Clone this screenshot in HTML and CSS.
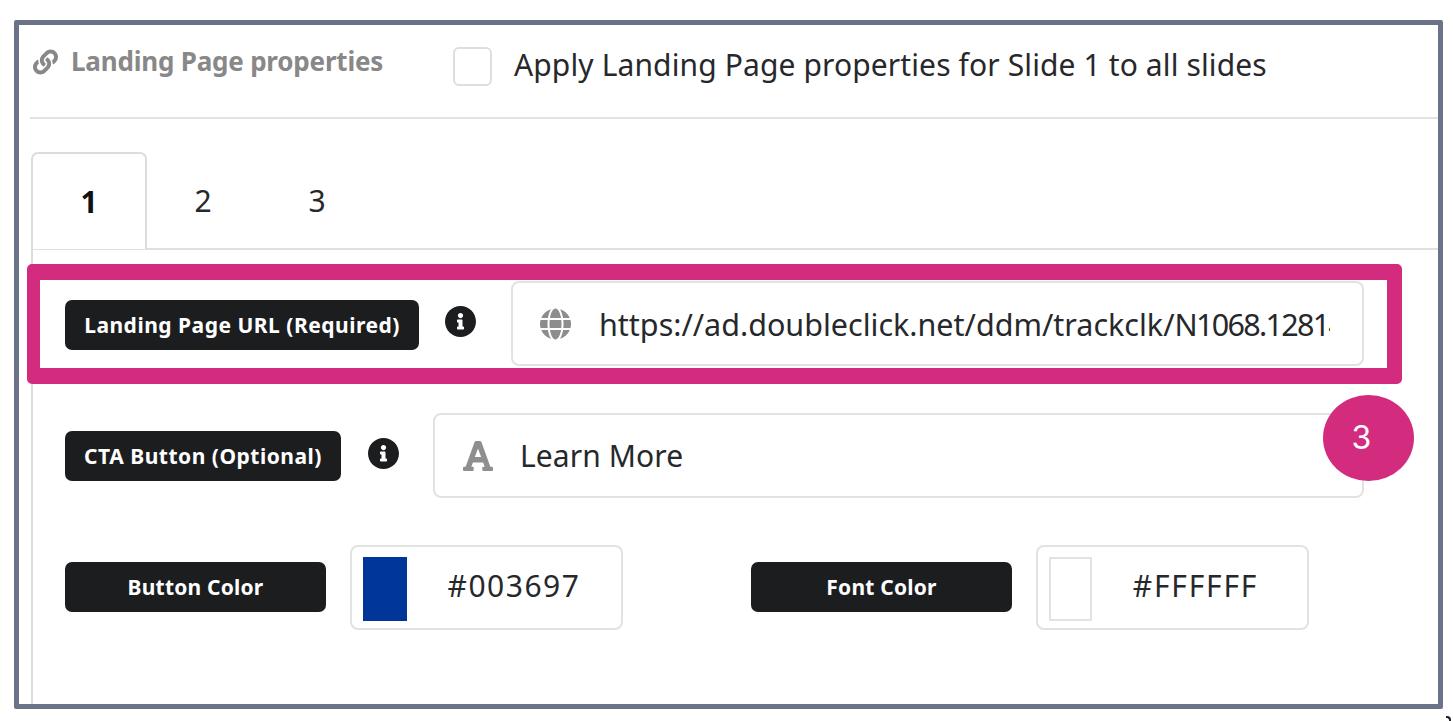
FILE: index.html
```html
<!DOCTYPE html>
<html lang="en">
<head>
<meta charset="utf-8">
<title>Landing Page properties</title>
<link rel="stylesheet" href="styles.css">
</head>
<body>
<div class="frame">
  <header class="head">
    <div class="title">
      <svg class="link-icon" viewBox="0 0 512 512"><path d="M326.612 185.391c59.747 59.809 58.927 155.698.36 214.59-.11.12-.24.25-.36.37l-67.2 67.2c-59.27 59.27-155.699 59.262-214.96 0-59.27-59.26-59.27-155.7 0-214.96l37.106-37.106c9.84-9.84 26.786-3.3 27.294 10.606.648 17.722 3.826 35.527 9.69 52.721 1.986 5.822.567 12.262-3.783 16.612l-13.087 13.087c-28.026 28.026-28.905 73.66-1.155 101.96 28.024 28.579 74.086 28.749 102.325.51l67.2-67.19c28.191-28.191 28.073-73.757 0-101.83-3.701-3.694-7.429-6.564-10.341-8.569a16.037 16.037 0 0 1-6.947-12.606c-.396-10.567 3.348-21.456 11.698-29.806l21.054-21.055c5.521-5.521 14.182-6.199 20.584-1.731a152.482 152.482 0 0 1 20.522 17.197zM467.547 44.449c-59.261-59.262-155.69-59.27-214.96 0l-67.2 67.2c-.12.12-.25.25-.36.37-58.566 58.892-59.387 154.781.36 214.59a152.454 152.454 0 0 0 20.521 17.196c6.402 4.468 15.064 3.789 20.584-1.731l21.054-21.055c8.35-8.35 12.094-19.239 11.698-29.806a16.037 16.037 0 0 0-6.947-12.606c-2.912-2.005-6.64-4.875-10.341-8.569-28.073-28.073-28.191-73.639 0-101.83l67.2-67.19c28.239-28.239 74.3-28.069 102.325.51 27.75 28.3 26.872 73.934-1.155 101.96l-13.087 13.087c-4.35 4.35-5.769 10.79-3.783 16.612 5.864 17.194 9.042 34.999 9.69 52.721.509 13.906 17.454 20.446 27.294 10.606l37.106-37.106c59.271-59.259 59.271-155.699.001-214.959z"/></svg>
      <span class="title-text">Landing Page properties</span>
    </div>
    <span class="checkbox"></span>
    <span class="apply">Apply Landing Page properties for Slide 1 to all slides</span>
  </header>
  <nav class="tabs">
    <span class="tab active">1</span>
    <span class="tab">2</span>
    <span class="tab">3</span>
  </nav>
  <section class="panel">
    <div class="row">
      <span class="label label-url">Landing Page URL (Required)</span>
      <svg class="info info-url" viewBox="8 8 496 496"><path d="M256 8C119.043 8 8 119.083 8 256c0 136.997 111.043 248 248 248s248-111.003 248-248C504 119.083 392.957 8 256 8zm0 110c23.196 0 42 18.804 42 42s-18.804 42-42 42-42-18.804-42-42 18.804-42 42-42zm56 254c0 6.627-5.373 12-12 12h-88c-6.627 0-12-5.373-12-12v-24c0-6.627 5.373-12 12-12h12v-64h-12c-6.627 0-12-5.373-12-12v-24c0-6.627 5.373-12 12-12h64c6.627 0 12 5.373 12 12v100h12c6.627 0 12 5.373 12 12v24z"/></svg>
      <div class="field field-url">
        <svg class="globe" viewBox="0 0 496 512"><path d="M336.5 160C322 70.7 287.8 8 248 8s-74 62.7-88.5 152h177zM152 256c0 22.2 1.2 43.5 3.3 64h185.3c2.1-20.5 3.3-41.8 3.3-64s-1.2-43.5-3.3-64H155.3c-2.1 20.5-3.3 41.8-3.3 64zm324.7-96c-28.6-67.9-86.5-120.4-158-141.6 24.4 33.8 41.2 84.7 50 141.6h108zM177.2 18.4C105.8 39.6 47.8 92.1 19.3 160h108c8.7-56.9 25.5-107.8 49.9-141.6zM487.4 192H372.7c2.1 21 3.3 42.5 3.3 64s-1.2 43-3.3 64h114.6c5.5-20.5 8.6-41.8 8.6-64s-3.1-43.5-8.5-64zM120 256c0-21.5 1.2-43 3.3-64H8.6C3.2 212.5 0 233.8 0 256s3.2 43.5 8.6 64h114.6c-2-21-3.2-42.5-3.2-64zm39.5 96c14.5 89.3 48.7 152 88.5 152s74-62.7 88.5-152h-177zm159.3 141.6c71.4-21.2 129.4-73.7 158-141.6h-108c-8.8 56.9-25.6 107.8-50 141.6zM19.3 352c28.6 67.9 86.5 120.4 158 141.6-24.4-33.8-41.2-84.7-50-141.6h-108z"/></svg>
        <span class="url-text">https://ad.doubleclick.net/ddm/trackclk/<span class="url-tail">N1068.12814</span></span>
      </div>
    </div>
    <div class="row">
      <span class="label label-cta">CTA Button (Optional)</span>
      <svg class="info info-cta" viewBox="8 8 496 496"><path d="M256 8C119.043 8 8 119.083 8 256c0 136.997 111.043 248 248 248s248-111.003 248-248C504 119.083 392.957 8 256 8zm0 110c23.196 0 42 18.804 42 42s-18.804 42-42 42-42-18.804-42-42 18.804-42 42-42zm56 254c0 6.627-5.373 12-12 12h-88c-6.627 0-12-5.373-12-12v-24c0-6.627 5.373-12 12-12h12v-64h-12c-6.627 0-12-5.373-12-12v-24c0-6.627 5.373-12 12-12h64c6.627 0 12 5.373 12 12v100h12c6.627 0 12 5.373 12 12v24z"/></svg>
      <div class="field field-cta">
        <svg class="font-icon" viewBox="0 32 448 448"><path d="M432 416h-23.41L277.88 53.69A32 32 0 0 0 247.58 32h-47.16a32 32 0 0 0-30.3 21.69L39.41 416H16a16 16 0 0 0-16 16v32a16 16 0 0 0 16 16h128a16 16 0 0 0 16-16v-32a16 16 0 0 0-16-16h-19.58l23.3-64h152.56l23.3 64H304a16 16 0 0 0-16 16v32a16 16 0 0 0 16 16h128a16 16 0 0 0 16-16v-32a16 16 0 0 0-16-16zM176.85 272L224 142.51 271.15 272z"/></svg>
        <span class="cta-text">Learn More</span>
      </div>
    </div>
    <div class="row">
      <span class="label label-color">Button Color</span>
      <div class="field field-color">
        <span class="swatch swatch-blue"></span>
        <span class="hex">#003697</span>
      </div>
      <span class="label label-color label-font">Font Color</span>
      <div class="field field-color">
        <span class="swatch swatch-white"></span>
        <span class="hex hex-white">#FFFFFF</span>
      </div>
    </div>
  </section>
  <div class="highlight"></div>
  <div class="callout">3</div>
</div>
<span class="corner-mark"></span>
</body>
</html>
```
FILE: styles.css
```css
* { box-sizing: border-box; }
html, body { margin: 0; height: 721px; overflow: hidden; background: #fff; }
body { font-family: "Noto Sans", "Open Sans", sans-serif; color: #26282b; }

.frame {
  position: relative;
  display: flex;
  flex-direction: column;
  width: 1429px;
  height: 689px;
  margin: 20px 0 0 14px;
  border: 5px solid #6b7389;
  border-radius: 2px;
  background: #fff;
}

.head {
  display: flex;
  align-items: flex-start;
  height: 94px;
  margin-left: 11px;
  border-bottom: 2px solid #e3e3e3;
  flex: none;
}
.title { display: flex; align-items: center; width: 423px; margin-top: 20px; color: #888; }
.link-icon { width: 25px; height: 26px; margin: 2px 13px 0 3px; fill: #888; flex: none; }
.title-text { font-size: 26px; font-weight: 700; line-height: 32px; letter-spacing: -0.2px; white-space: nowrap; }
.checkbox { width: 39px; height: 39px; margin-top: 22px; border: 2px solid #dedede; border-radius: 6px; flex: none; }
.apply { margin: 19px 0 0 22px; font-size: 30px; letter-spacing: 0.12px; line-height: 42px; white-space: nowrap; }

.tabs { position: relative; z-index: 1; display: flex; height: 97px; margin: 33px 0 0 12px; flex: none; }
.tab {
  display: flex;
  align-items: center;
  justify-content: center;
  width: 114px;
  height: 97px;
  padding-right: 2px;
  font-size: 30px;
}
.tab.active {
  width: 116px;
  padding-right: 0;
  border: 2px solid #dcdcdc;
  border-bottom: 0;
  border-radius: 7px 7px 0 0;
  font-weight: 700;
  color: #111;
  background: #fff;
}

.panel {
  flex: 1;
  display: flex;
  flex-direction: column;
  gap: 47px;
  margin: -1px 0 0 12px;
  padding: 31px 74px 0 32px;
  border-left: 2px solid #dcdcdc;
  border-top: 2px solid #e0e0e0;
}

.row { display: flex; align-items: center; height: 85px; }

.label {
  display: flex;
  align-items: center;
  justify-content: center;
  height: 50px;
  border-radius: 7px;
  background: #1c1d1f;
  color: #fff;
  font-size: 21px;
  font-weight: 700;
  letter-spacing: 0.5px;
  white-space: nowrap;
  flex: none;
}
.label-url { width: 354px; margin-top: 2px; }
.label-cta { width: 276px; }
.label-color { width: 261px; margin-bottom: 2px; letter-spacing: 0.2px; }
.label-font { margin-left: 128px; }

.info { width: 31px; height: 31px; fill: #1c1d1f; flex: none; margin-bottom: 5px; }
.info-url { margin-left: 26px; margin-right: 35px; }
.info-cta { margin-left: 27px; margin-right: 34px; }

.field {
  display: flex;
  align-items: center;
  height: 85px;
  border: 2px solid #e2e2e2;
  border-radius: 8px;
  background: #fff;
}
.field-url, .field-cta { flex: 1; min-width: 0; }
.field-url { padding: 0 32px 0 27px; }
.field-cta { padding-left: 28px; }
.field-color { width: 273px; margin-left: 24px; padding-left: 11px; }

.globe { width: 31px; height: 32px; fill: #8d8d8d; flex: none; margin-right: 28px; }
.url-text { font-size: 30.5px; line-height: 44px; white-space: nowrap; overflow: hidden; flex: 1; min-width: 0; }
.url-tail { letter-spacing: -1.7px; }
.font-icon { width: 30px; height: 30px; fill: #8f8f8f; flex: none; margin-right: 27px; }
.cta-text { font-size: 30px; letter-spacing: 0.1px; }

.swatch { width: 44px; height: 64px; margin-top: 2px; flex: none; }
.swatch-blue { background: #003697; }
.swatch-white { border: 2px solid #e2e2e2; width: 43px; }
.hex { flex: 1; padding-bottom: 5px; text-align: center; font-size: 30px; letter-spacing: 1.5px; white-space: nowrap; }
.hex-white { padding-right: 8px; letter-spacing: 1.8px; }

.highlight {
  position: absolute;
  left: 8px;
  top: 239px;
  width: 1375px;
  height: 120px;
  border: solid #d32c7f;
  border-width: 16px 15px 16px 13px;
  border-radius: 5px;
  pointer-events: none;
  z-index: 2;
}
.callout {
  position: absolute;
  left: 1304px;
  top: 370px;
  width: 91px;
  height: 86px;
  display: flex;
  align-items: center;
  justify-content: center;
  border-radius: 50%;
  background: #d32c7f;
  color: #fff;
  font-family: "Inter", sans-serif;
  font-size: 32px;
  padding: 0 14px 2px 0;
  z-index: 3;
}
.corner-mark {
  position: absolute;
  left: 1446px;
  top: 716px;
  width: 5px;
  height: 5px;
  border-top: 2px solid #222;
  border-right: 2px solid #222;
  border-top-right-radius: 4px;
}
```
